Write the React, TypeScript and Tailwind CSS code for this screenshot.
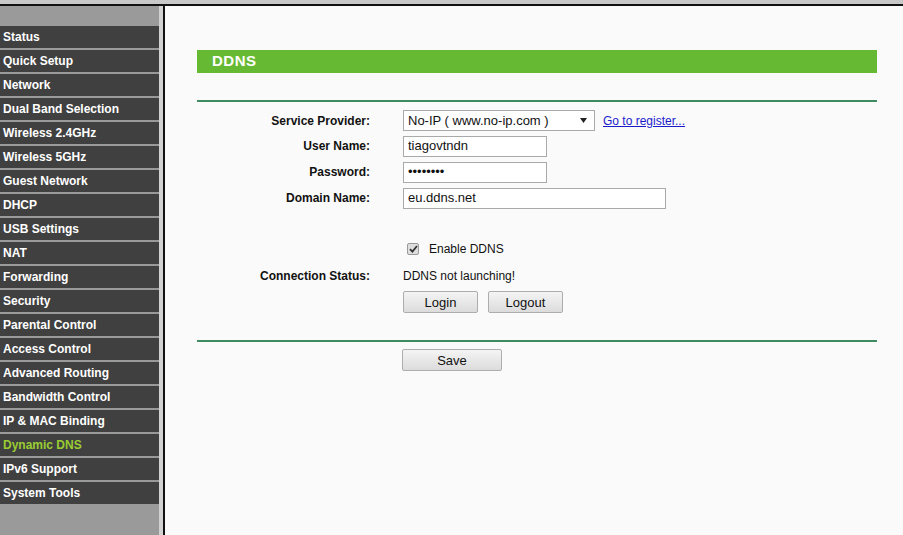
import React from 'react';

const menu = [
  'Status',
  'Quick Setup',
  'Network',
  'Dual Band Selection',
  'Wireless 2.4GHz',
  'Wireless 5GHz',
  'Guest Network',
  'DHCP',
  'USB Settings',
  'NAT',
  'Forwarding',
  'Security',
  'Parental Control',
  'Access Control',
  'Advanced Routing',
  'Bandwidth Control',
  'IP & MAC Binding',
  'Dynamic DNS',
  'IPv6 Support',
  'System Tools',
];

const Label: React.FC<{ children: React.ReactNode }> = ({ children }) => (
  <div className="w-[173px] shrink-0 text-right text-[12px] font-bold text-[#111]">{children}</div>
);

const Btn: React.FC<{ w: string; children: React.ReactNode }> = ({ w, children }) => (
  <button
    className={`${w} h-[22px] block border border-[#adadad] rounded-[2px] bg-gradient-to-b from-[#f4f4f4] to-[#dcdcdc] text-[13px] text-[#111] leading-none`}
  >
    {children}
  </button>
);

export default function App() {
  return (
    <div className="w-[903px] h-[535px] overflow-hidden flex flex-col bg-[#fafafa] font-['Liberation_Sans',Arial,sans-serif]">
      <div className="h-[4px] bg-[#c8c8c8]" />
      <div className="h-[2px] bg-[#111]" />
      <div className="flex flex-1 min-h-0">
        <nav className="w-[159px] shrink-0 bg-[#9a9a9a] pt-[20px] flex flex-col gap-[2px]">
          {menu.map((m) => (
            <div
              key={m}
              className={`h-[22px] bg-[#404040] pl-[3px] flex items-center text-[12px] font-bold whitespace-nowrap ${
                m === 'Dynamic DNS' ? 'text-[#9acd32]' : 'text-white'
              }`}
            >
              {m}
            </div>
          ))}
        </nav>
        <div className="w-[4px] shrink-0 bg-[#d2d2d2]" />
        <div className="w-[2px] shrink-0 bg-[#111]" />
        <main className="flex-1 pl-[32px] pt-[44px]">
          <div className="w-[680px]">
            <div className="h-[23px] bg-[#66b933] pl-[15px] flex items-center text-[15px] font-bold tracking-[0.5px] text-white">
              DDNS
            </div>
            <div className="mt-[27px] h-[2px] bg-[#3f8a5e]" />

            <div className="mt-[6px] flex flex-col">
              <div className="h-[25px] flex items-center">
                <Label>Service Provider:</Label>
                <div className="ml-[33px] w-[192px] h-[21px] border border-[#a9a9a9] bg-white flex items-center pl-[4px] pr-[7px] text-[13px] text-[#111]">
                  <span className="flex-1">No-IP ( www.no-ip.com )</span>
                  <svg width="7" height="5" viewBox="0 0 7 5">
                    <path d="M0 0 L7 0 L3.5 5 Z" fill="#222" />
                  </svg>
                </div>
                <a className="ml-[8px] text-[12px] text-[#1a1acc] underline">Go to register...</a>
              </div>
              <div className="h-[26px] flex items-center">
                <Label>User Name:</Label>
                <div className="ml-[33px] w-[144px] h-[21px] border border-[#a9a9a9] bg-white flex items-center pl-[4px] text-[13px] text-[#111]">
                  tiagovtndn
                </div>
              </div>
              <div className="h-[26px] flex items-center">
                <Label>Password:</Label>
                <div className="ml-[33px] w-[144px] h-[21px] border border-[#a9a9a9] bg-white flex items-center pl-[4px] text-[13px] text-[#111]">
                  ••••••••
                </div>
              </div>
              <div className="h-[26px] flex items-center">
                <Label>Domain Name:</Label>
                <div className="ml-[33px] w-[263px] h-[21px] border border-[#a9a9a9] bg-white flex items-center pl-[4px] text-[13px] text-[#111]">
                  eu.ddns.net
                </div>
              </div>

              <div className="mt-[25px] h-[26px] flex items-center">
                <div className="w-[173px] shrink-0" />
                <div className="ml-[37px] w-[12px] h-[12px] border border-[#9a9a9a] rounded-[2px] bg-[#dedede] flex items-center justify-center">
                  <svg width="9" height="8" viewBox="0 0 9 8">
                    <path d="M1 4.2 L3.4 6.6 L8 1" stroke="#333" strokeWidth="1.8" fill="none" />
                  </svg>
                </div>
                <span className="ml-[10px] text-[12px] text-[#111]">Enable DDNS</span>
              </div>
              <div className="mt-[1px] h-[26px] flex items-center">
                <Label>Connection Status:</Label>
                <span className="ml-[33px] text-[12px] text-[#111]">DDNS not launching!</span>
              </div>
              <div className="mt-[2px] flex items-center">
                <div className="w-[173px] shrink-0" />
                <div className="ml-[33px] flex gap-[10px]">
                  <Btn w="w-[75px]">Login</Btn>
                  <Btn w="w-[75px]">Logout</Btn>
                </div>
              </div>
            </div>

            <div className="mt-[27px] h-[2px] bg-[#3f8a5e]" />
            <div className="mt-[7px] flex">
              <div className="w-[173px] shrink-0" />
              <div className="ml-[32px] flex">
                <Btn w="w-[100px]">Save</Btn>
              </div>
            </div>
          </div>
        </main>
      </div>
    </div>
  );
}
